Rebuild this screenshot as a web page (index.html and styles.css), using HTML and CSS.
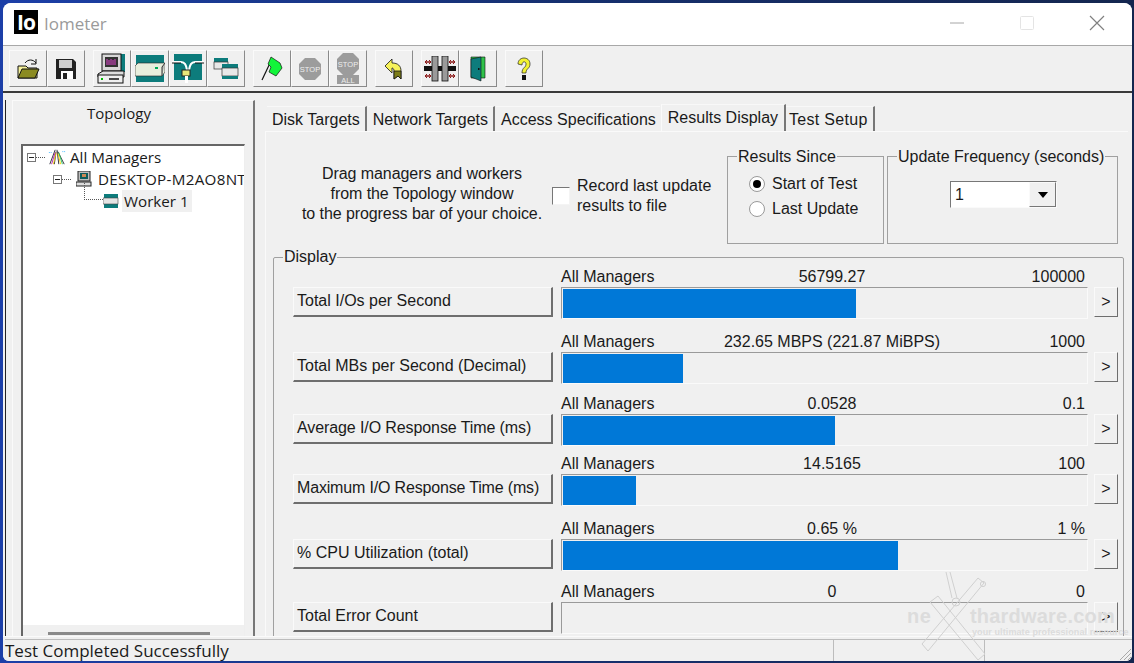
FILE: index.html
```html
<!DOCTYPE html>
<html lang="en">
<head>
<meta charset="utf-8">
<title>Iometer</title>
<link rel="stylesheet" href="styles.css">
</head>
<body>
<div class="window">
  <header class="titlebar">
    <span class="logo">Io</span>
    <span class="title">Iometer</span>
    <span class="controls">
      <svg class="ctl" width="16" height="16" viewBox="0 0 16 16"><path d="M1 8h14" stroke="#a6a6a6" fill="none"/></svg>
      <svg class="ctl" width="16" height="16" viewBox="0 0 16 16"><rect x="1.5" y="1.5" width="13" height="13" rx="1" stroke="#e4e4e4" fill="none"/></svg>
      <svg class="ctl" width="16" height="16" viewBox="0 0 16 16"><path d="M1 1l14 14M15 1L1 15" stroke="#808080" stroke-width="1.2" fill="none"/></svg>
    </span>
  </header>
  <nav class="toolbar">
    <div class="tbgroup">
      <button class="tb"><svg width="26" height="26" viewBox="0 0 26 26"><path d="M3 10h8l2 2h9v10H3z" fill="#f5f19a" stroke="#111"/><path d="M3 22l4-9h17l-4 9z" fill="#8b8b22" stroke="#111"/><path d="M10 7c3-4 8-4 11 0" fill="none" stroke="#111"/><path d="M21 3v5h-5" fill="none" stroke="#111"/></svg></button>
      <button class="tb"><svg width="20" height="20" viewBox="0 0 20 20"><path d="M0 0h17l3 3v17H0z" fill="#222"/><rect x="3" y="1" width="13" height="8" fill="#cfcfcf"/><rect x="5" y="12" width="12" height="8" fill="#fff"/><rect x="7" y="14" width="4" height="6" fill="#222"/></svg></button>
    </div>
    <div class="tbgroup">
      <button class="tb"><svg width="30" height="32" viewBox="0 0 30 32"><rect x="6" y="1" width="22" height="18" fill="#0d7c7c"/><rect x="5" y="1" width="19" height="17" fill="#d8d8d8" stroke="#111"/><rect x="8" y="4" width="13" height="10" fill="#333"/><path d="M10 12V6M12 12V7M14 12V6M16 12V7M18 12V6" stroke="#d4c" stroke-width="1"/><path d="M1 21l5-3h21v6H1z" fill="#ddd" stroke="#111"/><rect x="1" y="22" width="25" height="8" fill="#efefef" stroke="#111"/><path d="M12 26h10" stroke="#111" stroke-width="1.5"/><rect x="4" y="25" width="2" height="2" fill="#0b0"/></svg></button>
      <button class="tb"><svg width="30" height="28" viewBox="0 0 30 28"><rect x="1" y="0" width="28" height="27" fill="#0d7c7c"/><path d="M0 11l3-3h27v9l-3 4H0z" fill="#e9eedd" stroke="#222" stroke-width=".6"/><path d="M27 21v-9l3-4" fill="#bbb" stroke="#333"/><rect x="20" y="12" width="3" height="2" fill="#0a5"/></svg></button>
      <button class="tb"><svg width="32" height="30" viewBox="0 0 32 30"><rect x="2" y="0" width="28" height="26" fill="#0d7c7c"/><path d="M0 8h9c4 0 5 3 6 8M32 8h-9c-4 0-5 3-6 8" fill="none" stroke="#fff" stroke-width="2"/><path d="M0 9h9M32 9h-9" stroke="#111"/><rect x="10" y="16" width="8" height="6" fill="#e8e87a" stroke="#222"/><rect x="13" y="22" width="3" height="7" fill="#fff"/></svg></button>
      <button class="tb"><svg width="26" height="22" viewBox="0 0 26 22"><rect x="1" y="0" width="14" height="4" fill="#0d7c7c"/><rect x="1" y="4" width="14" height="7" fill="#e8e8e8" stroke="#333" stroke-width=".7"/><rect x="9" y="6" width="16" height="4" fill="#0d7c7c"/><rect x="9" y="10" width="16" height="8" fill="#e8e8e8" stroke="#333" stroke-width=".7"/><rect x="9" y="18" width="16" height="3" fill="#0d7c7c"/></svg></button>
    </div>
    <div class="tbgroup">
      <button class="tb"><svg width="22" height="25" viewBox="0 0 22 25"><path d="M1 24L10 5" stroke="#111" stroke-width="1.2"/><path d="M10 1l9 6 2 5-6 8-7-4 2-5-3-3z" fill="#12f53a" stroke="#111" stroke-width=".7"/></svg></button>
      <button class="tb"><svg width="24" height="24" viewBox="0 0 24 24"><path d="M7 1h10l6 6v10l-6 6H7l-6-6V7z" fill="#9c9c9c"/><text class="stoptxt" x="12" y="14.5" text-anchor="middle">STOP</text></svg></button>
      <button class="tb"><svg width="24" height="32" viewBox="0 0 24 32"><path d="M7 0h10l6 6v10l-6 6H7l-6-6V6z" fill="#9c9c9c"/><text class="stoptxt" x="12" y="13.5" text-anchor="middle">STOP</text><rect x="1" y="22" width="22" height="9" fill="#9c9c9c"/><text class="stoptxt" x="12" y="29.5" text-anchor="middle">ALL</text></svg></button>
    </div>
    <div class="tbgroup">
      <button class="tb"><svg width="20" height="22" viewBox="0 0 20 22"><path d="M1 8l7-7v4c6 0 9 3 9 8v8l-3-3-4 3v-8c0-2-1-3-2-3v5z" fill="#f6f25a" stroke="#111" stroke-width=".8"/><path d="M10 21v-8l7 0v8l-3-3z" fill="#7c7c18" stroke="#111" stroke-width=".8"/></svg></button>
    </div>
    <div class="tbgroup">
      <button class="tb"><svg width="32" height="26" viewBox="0 0 32 26"><rect x="0" y="10" width="32" height="5" fill="#111"/><rect x="8" y="0" width="6" height="25" fill="#9a9a9a" stroke="#111" stroke-width=".8"/><rect x="18" y="0" width="6" height="25" fill="#9a9a9a" stroke="#111" stroke-width=".8"/><path d="M1 6h6M25 6h6M1 20h6M25 20h6" stroke="#8b1a1a" stroke-width="1.6"/><path d="M3 4L1 6l2 2M5 4l2 2-2 2M27 4l-2 2 2 2M29 4l2 2-2 2M3 18l-2 2 2 2M5 18l2 2-2 2M27 18l-2 2 2 2M29 18l2 2-2 2" fill="none" stroke="#8b1a1a"/></svg></button>
      <button class="tb"><svg width="16" height="26" viewBox="0 0 16 26"><path d="M1 1h14v21H1z" fill="#2fc24a" stroke="#111" stroke-width=".6"/><path d="M1 3l10-2v24l-10-4z" fill="#0d7c7c" stroke="#111" stroke-width=".6"/><rect x="8" y="12" width="1.5" height="2" fill="#111"/></svg></button>
    </div>
    <div class="tbgroup">
      <button class="tb"><svg width="14" height="24" viewBox="0 0 14 24"><path d="M1 7c0-8 12-8 12 0 0 5-4 4-4 9H5c0-6 4-5 4-9 0-3-4-3-4 1z" fill="#f2f232" stroke="#222" stroke-width=".7"/><rect x="5" y="18" width="4" height="5" fill="#111"/></svg></button>
    </div>
  </nav>
  <main class="workspace">
    <aside class="topology">
      <h2 class="topo-title">Topology</h2>
      <div class="tree">
        <div class="node">
          <span class="expander"></span><span class="dots-h"></span>
          <svg class="node-icon" width="18" height="18" viewBox="0 0 20 18"><path d="M2 17L8 1M7 17L9 3M12 17L10 1M18 17L11 3" fill="none" stroke="#223" stroke-width="1"/><path d="M6 17l3-13M14 17l-3-12" stroke="#f4d000"/><path d="M4 17L8 4" stroke="#b018b0"/><path d="M16 17L12 4" stroke="#29c25a"/><path d="M1 4h3M16 3h3" stroke="#38b6ff" stroke-dasharray="1 1"/></svg>
          <span class="node-label label-all">All Managers</span>
        </div>
        <div class="node node-mgr">
          <span class="expander"></span><span class="dots-h"></span>
          <svg class="node-icon icon-mgr" width="16" height="16" viewBox="0 0 16 16"><rect x="2" y="0" width="12" height="10" fill="#bdbdbd" stroke="#222"/><rect x="4" y="2" width="8" height="6" fill="#0d5c5c"/><rect x="6" y="3" width="4" height="3" fill="#c85"/><rect x="0" y="11" width="15" height="4" fill="#ddd" stroke="#222"/></svg>
          <span class="node-label label-mgr">DESKTOP-M2AO8NT</span>
        </div>
        <div class="node node-wrk">
          <span class="dots-l"></span>
          <svg class="node-icon" width="16" height="14" viewBox="0 0 16 14"><rect x="1" y="0" width="14" height="14" fill="#0d7c7c"/><rect x="0" y="4" width="15" height="6" fill="#e5e5e5" stroke="#444" stroke-width=".6"/></svg>
          <span class="node-label node-sel">Worker 1</span>
        </div>
        <div class="tree-hscroll"><span class="tree-thumb"></span></div>
      </div>
    </aside>
    <section class="pane">
      <div class="tabs">
        <span class="tab">Disk Targets</span>
        <span class="tab">Network Targets</span>
        <span class="tab tab-plain">Access Specifications</span>
        <span class="tab tab-active">Results Display</span>
        <span class="tab tab-last">Test Setup</span>
      </div>
      <div class="page">
        <div class="top-row">
          <p class="hint">Drag managers and workers<br>from the Topology window<br>to the progress bar of your choice.</p>
          <label class="record"><span class="checkbox"></span><span>Record last update<br>results to file</span></label>
          <fieldset class="group since">
            <legend>Results Since</legend>
            <div class="radio-row"><span class="radio radio-on"></span>Start of Test</div>
            <div class="radio-row"><span class="radio"></span>Last Update</div>
          </fieldset>
          <fieldset class="group freq">
            <legend>Update Frequency (seconds)</legend>
            <div class="combo"><span class="combo-val">1</span><span class="combo-btn"><span class="arrow"></span></span></div>
          </fieldset>
        </div>
        <fieldset class="group display">
          <legend>Display</legend>
          <div class="row r1">
            <button class="metric">Total I/Os per Second</button>
            <div class="meter">
              <div class="meter-head"><span>All Managers</span><span class="val">56799.27</span><span class="max">100000</span></div>
              <div class="bar"><div class="fill" style="width:293px"></div></div>
            </div>
            <button class="more">&gt;</button>
          </div>
          <div class="row r2">
            <button class="metric">Total MBs per Second (Decimal)</button>
            <div class="meter">
              <div class="meter-head"><span>All Managers</span><span class="val">232.65 MBPS (221.87 MiBPS)</span><span class="max">1000</span></div>
              <div class="bar"><div class="fill" style="width:120px"></div></div>
            </div>
            <button class="more">&gt;</button>
          </div>
          <div class="row r3">
            <button class="metric">Average I/O Response Time (ms)</button>
            <div class="meter">
              <div class="meter-head"><span>All Managers</span><span class="val">0.0528</span><span class="max">0.1</span></div>
              <div class="bar"><div class="fill" style="width:272px"></div></div>
            </div>
            <button class="more">&gt;</button>
          </div>
          <div class="row r4">
            <button class="metric">Maximum I/O Response Time (ms)</button>
            <div class="meter">
              <div class="meter-head"><span>All Managers</span><span class="val">14.5165</span><span class="max">100</span></div>
              <div class="bar"><div class="fill" style="width:73px"></div></div>
            </div>
            <button class="more">&gt;</button>
          </div>
          <div class="row r5">
            <button class="metric">% CPU Utilization (total)</button>
            <div class="meter">
              <div class="meter-head"><span>All Managers</span><span class="val">0.65 %</span><span class="max">1 %</span></div>
              <div class="bar"><div class="fill" style="width:335px"></div></div>
            </div>
            <button class="more">&gt;</button>
          </div>
          <div class="row r6">
            <button class="metric">Total Error Count</button>
            <div class="meter">
              <div class="meter-head"><span>All Managers</span><span class="val">0</span><span class="max">0</span></div>
              <div class="bar"></div>
            </div>
            <button class="more">&gt;</button>
          </div>
        </fieldset>
      </div>
    </section>
  </main>
  <footer class="statusbar">
    <span class="status-text">Test Completed Successfully</span>
    <span class="status-cell cell-a"></span>
    <span class="status-cell cell-b"></span>
    <svg class="grip" width="14" height="14" viewBox="0 0 14 14"><path d="M13 2L2 13M13 6l-7 7M13 10l-3 3" stroke="#a8a8a8" fill="none"/></svg>
  </footer>
  <div class="watermark">
    <svg class="wm-x" width="72" height="90" viewBox="0 0 72 90"><path d="M60 6L4 72l6 7L66 11zM12 30l48 58 7-6L20 24zM28 0l6 26M32 0l7 26" fill="none" stroke="#d0d0d0"/><circle cx="38" cy="30" r="4" fill="none" stroke="#d0d0d0"/><circle cx="65" cy="12" r="2.6" fill="none" stroke="#d0d0d0"/></svg>
    <span class="wm-ne">ne</span><span class="wm-hw">thardware.com</span>
    <span class="wm-sub">your ultimate professional resource</span>
  </div>
</div>
</body>
</html>
```

FILE: styles.css
```css
* { box-sizing: border-box; }
html, body { margin: 0; height: 100%; }
body {
  width: 1134px;
  height: 663px;
  overflow: hidden;
  background: linear-gradient(90deg, #1c3fa8, #16306f 50%, #14264f);
  font-family: "Liberation Sans", Arial, sans-serif;
  font-size: 16px;
  color: #1a1a1a;
  padding: 3px 2px 2px 3px;
}
button { font: inherit; color: inherit; margin: 0; padding: 0; }
.window {
  position: relative;
  height: 658px;
  background: #f0f0f0;
  border-radius: 8px 8px 6px 6px;
  overflow: hidden;
  display: flex;
  flex-direction: column;
}
.titlebar {
  height: 43px;
  flex: none;
  background: #fff;
  border-bottom: 1px solid #a8a8a8;
  display: flex;
  align-items: center;
  padding-left: 11px;
}
.logo {
  width: 24px;
  height: 24px;
  margin-bottom: 4px;
  background: #000;
  color: #fff;
  font: 700 21px/24px "Open Sans", sans-serif;
  text-align: center;
  letter-spacing: -1px;
}
.title {
  margin-left: 6px;
  margin-bottom: 2px;
  color: #9a9a9a;
  font: 17px "Open Sans", sans-serif;
}
.controls { margin-left: auto; display: flex; gap: 54px; padding-right: 27px; padding-bottom: 2px; }
.ctl { display: block; }
.toolbar {
  height: 47px;
  flex: none;
  display: flex;
  gap: 8px;
  padding: 4px 0 0 6px;
  border-bottom: 2px solid #3a3a3a;
}
.tbgroup { display: flex; }
.tb {
  width: 38px;
  height: 37px;
  background: #f0f0f0;
  border: 1px solid;
  border-color: #fafafa #8a8a8a #8a8a8a #fafafa;
  display: flex;
  align-items: center;
  justify-content: center;
}
.tb svg { display: block; }
.stoptxt { font: 7.5px "Liberation Sans", sans-serif; fill: #eee; }
.workspace {
  flex: 1;
  min-height: 0;
  display: flex;
  padding: 7px 0 0 2px;
}
.topology {
  width: 250px;
  flex: none;
  border-left: 1px solid #222;
  padding-left: 5px;
  display: flex;
  flex-direction: column;
  position: relative;
}
.topology::after {
  content: "";
  position: absolute;
  inset: 0 0 0 6px;
  border: 1px solid #fafafa;
  border-right: 2px solid #777;
  border-bottom: 0;
  pointer-events: none;
}
.topo-title {
  margin: 0;
  height: 44px;
  padding: 3px 28px 0 0;
  font: 400 15px/20px "Open Sans", sans-serif;
  text-align: center;
}
.tree {
  position: relative;
  margin: 0 10px 0 10px;
  flex: 1;
  min-height: 0;
  background: #fff;
  border-top: 2px solid #666;
  border-left: 2px solid #666;
  border-right: 1px solid #eee;
  overflow: hidden;
  padding-top: 0;
  font: 15.2px "Open Sans", sans-serif;
}
.node { display: flex; align-items: center; height: 22px; position: relative; white-space: nowrap; }
.expander {
  width: 9px;
  height: 9px;
  border: 1px solid #777;
  margin-left: 4px;
  flex: none;
  background: linear-gradient(#222, #222) center / 5px 1px no-repeat;
}
.dots-h { width: 9px; border-top: 1px dotted #555; flex: none; }
.dots-l {
  position: absolute;
  left: 61px;
  top: -7px;
  width: 19px;
  height: 17px;
  border-left: 1px dotted #555;
  border-bottom: 1px dotted #555;
}
.node-icon { margin-left: 3px; flex: none; }
.icon-mgr { margin-left: 5px; }
.node-label { margin-left: 4px; padding: 0 3px 0 0; }
.label-all { margin-left: 4px; }
.label-mgr { margin-left: 6px; letter-spacing: .3px; }
.node-mgr { padding-left: 26px; }
.node-wrk { padding-left: 77px; }
.node-sel { background: #f0f0f0; padding: 0 3px 0 2px; margin-left: 3px; line-height: 22px; }
.tree-hscroll {
  position: absolute;
  left: 0;
  right: 0;
  bottom: 0;
  height: 11px;
  background: #f0f0f0;
}
.tree-thumb {
  position: absolute;
  left: 25px;
  width: 162px;
  bottom: 1px;
  height: 3px;
  background: #8a8a8a;
}
.pane {
  flex: 1;
  min-width: 0;
  display: flex;
  flex-direction: column;
  padding: 0 4px 0 10px;
}
.tabs {
  display: flex;
  height: 31px;
  flex: none;
  align-items: flex-end;
  padding-left: 2px;
  position: relative;
  z-index: 1;
}
.tab {
  height: 25px;
  padding: 1px 5px 0 5px;
  line-height: 24px;
  border-right: 2px solid #777;
  border-top: 1px solid #f8f8f8;
  margin-right: 1px;
  white-space: nowrap;
}
.tab-plain { border-right: 0; margin-right: 1px; padding-right: 4px; }
.tab-active {
  height: 27px;
  padding: 2px 6px 0 6px;
  border-left: 1px solid #fafafa;
  line-height: 22px;
  margin-right: 0;
}
.tab-last { padding-left: 3px; letter-spacing: .3px; }
.page {
  flex: 1;
  min-height: 0;
  border-top: 1px solid #fafafa;
  border-left: 1px solid #fafafa;
  overflow: hidden;
  padding: 0 0 0 7px;
}
.top-row { display: flex; height: 115px; position: relative; }
.hint {
  margin: 32px 0 0 22px;
  width: 254px;
  flex: none;
  text-align: center;
  line-height: 20px;
  letter-spacing: -.08px;
}
.record { display: flex; align-items: flex-start; margin: 44px 0 0 3px; width: 175px; flex: none; line-height: 20px; }
.record span:last-child { margin-left: 7px; }
.checkbox {
  width: 18px;
  height: 18px;
  margin-top: 11px;
  background: #fff;
  border: 1px solid;
  border-color: #777 #f4f4f4 #f4f4f4 #777;
  flex: none;
}
.group {
  margin: 0;
  padding: 0;
  border: 1px solid #a0a0a0;
  min-width: 0;
}
.group legend { margin-left: 9px; padding: 0 1px; line-height: 18px; }
.since legend, .freq legend { padding-top: 2px; }
.since { width: 157px; height: 98px; margin-top: 14px; flex: none; }
.radio-row { display: flex; align-items: center; height: 25px; padding-left: 21px; }
.radio-row:first-of-type { margin-top: 5px; }
.radio {
  width: 16px;
  height: 16px;
  border-radius: 50%;
  background: #fff;
  border: 1px solid #999;
  margin-right: 7px;
  flex: none;
  position: relative;
}
.radio-on::after {
  content: "";
  position: absolute;
  inset: 3px;
  border-radius: 50%;
  background: #000;
}
.freq { width: 231px; height: 98px; margin-top: 14px; margin-left: 3px; flex: none; }
.combo {
  display: flex;
  width: 107px;
  height: 27px;
  margin: 15px 0 0 62px;
  background: #fff;
  border: 1px solid;
  border-color: #777 #fafafa #fafafa #777;
}
.combo-val { flex: 1; padding-left: 4px; line-height: 25px; }
.combo-btn {
  width: 27px;
  background: #f0f0f0;
  border: 1px solid;
  border-color: #fafafa #777 #777 #fafafa;
  display: flex;
  align-items: center;
  justify-content: center;
}
.arrow {
  width: 0;
  height: 0;
  border: 5px solid transparent;
  border-top: 6px solid #000;
  border-bottom: 0;
}
.display {
  margin: 1px 0 0 0;
  width: 851px;
  height: 420px;
  padding: 0 0 0 19px;
  border-radius: 2px;
}
.display legend { margin-left: -10px; }
.row {
  display: flex;
  align-items: flex-end;
  height: 42px;
}
.r1 { margin-top: 11px; }
.r2 { margin-top: 23px; }
.r3 { margin-top: 20px; }
.r4 { margin-top: 18px; }
.r5 { margin-top: 23px; }
.r6 { margin-top: 21px; }
.metric {
  width: 260px;
  height: 30px;
  flex: none;
  text-align: left;
  padding: 0 0 2px 3px;
  background: #f0f0f0;
  border: 1px solid;
  border-color: #fafafa #6e6e6e #6e6e6e #fafafa;
  border-bottom-width: 2px;
  border-right-width: 2px;
  margin-bottom: 2px;
}
.r3 .metric { letter-spacing: -.1px; }
.r4 .metric { letter-spacing: -.17px; }
.meter { width: 527px; margin-left: 8px; flex: none; }
.meter-head {
  display: grid;
  grid-template-columns: 1fr auto 1fr;
  height: 16px;
  line-height: 16px;
  padding-right: 3px;
  margin-bottom: 2px;
}
.val { text-align: center; padding-left: 18px; }
.max { text-align: right; }
.bar {
  height: 32px;
  border: 1px solid;
  border-color: #9a9a9a #fafafa #fafafa #9a9a9a;
  padding: 1px 0 0 1px;
}
.fill { height: 100%; background: #0078d7; }
.more {
  width: 24px;
  height: 30px;
  flex: none;
  margin-left: 6px;
  margin-bottom: 2px;
  background: #f0f0f0;
  border: 1px solid;
  border-color: #fafafa #6e6e6e #6e6e6e #fafafa;
}
.statusbar {
  height: 25px;
  flex: none;
  background: #f0f0f0;
  border-top: 1px solid #fafafa;
  display: flex;
  padding: 2px 0 0 2px;
  position: relative;
  z-index: 2;
}
.status-text {
  flex: 1;
  font: 17px/22px "Open Sans", sans-serif;
  border-top: 1px solid #bcbcbc;
}
.status-cell { border-top: 1px solid #bcbcbc; border-left: 1px solid #bcbcbc; }
.cell-a { width: 151px; }
.cell-b { width: 148px; }
.grip { position: absolute; right: 0; bottom: 0; }
.watermark {
  position: absolute;
  right: 0;
  top: 570px;
  width: 230px;
  height: 88px;
  z-index: 3;
  pointer-events: none;
  font-weight: 700;
  color: #dcdcdc;
}
.wm-x { position: absolute; left: 16px; top: -1px; }
.wm-ne { position: absolute; left: 5px; top: 32px; font-size: 20px; letter-spacing: 0.5px; }
.wm-hw { position: absolute; left: 68px; top: 32px; font-size: 20px; letter-spacing: 0.2px; }
.wm-sub { position: absolute; left: 70px; top: 54px; font-size: 9px; white-space: nowrap; letter-spacing: .1px; }
```
